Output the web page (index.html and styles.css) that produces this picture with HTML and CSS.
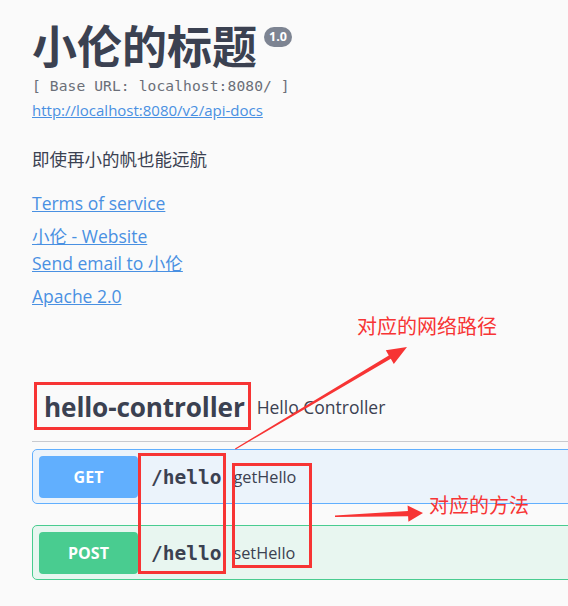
FILE: index.html
```html
<!DOCTYPE html>
<html lang="zh">
<head>
<meta charset="utf-8">
<title>小伦的标题</title>
<link rel="stylesheet" href="styles.css">
</head>
<body>
<div class="page">
  <section class="info">
    <div class="title-row">
      <h2 class="title">小伦的标题</h2>
      <span class="version">1.0</span>
    </div>
    <div class="base-url">[ Base URL: localhost:8080/ ]</div>
    <a class="link api-link" href="#">http://localhost:8080/v2/api-docs</a>
    <p class="desc">即使再小的帆也能远航</p>
    <a class="link info-link terms" href="#">Terms of service</a>
    <a class="link info-link website" href="#">小伦 - Website</a>
    <a class="link info-link email" href="#">Send email to 小伦</a>
    <a class="link info-link license" href="#">Apache 2.0</a>
  </section>

  <section class="tag">
    <h3 class="tag-head">
      <span class="tag-name">hello-controller</span>
      <small class="tag-desc">Hello Controller</small>
    </h3>
    <div class="opblock get">
      <span class="method">GET</span>
      <span class="path">/hello</span>
      <span class="summary">getHello</span>
    </div>
    <div class="opblock post">
      <span class="method">POST</span>
      <span class="path">/hello</span>
      <span class="summary">setHello</span>
    </div>
  </section>
</div>

<svg class="marks" width="568" height="606" viewBox="0 0 568 606" aria-hidden="true">
  <rect x="35.5" y="383.5" width="214" height="45" />
  <rect x="139.5" y="454.5" width="85" height="118" />
  <rect x="233.5" y="464.5" width="77" height="102" />
  <polygon class="arrow" points="235,448.6 388.8,355.4 385.8,350.2 407,347 393.8,364 390.8,358.8 235.6,449.4" />
  <polygon class="arrow" points="335,517 408.1,516.2 408.4,521.8 423,513 407.6,505.6 407.9,511 335,515.4" />
</svg>
<div class="note note-path">对应的网络路径</div>
<div class="note note-method">对应的方法</div>
</body>
</html>
```

FILE: styles.css
```css
html, body {
  margin: 0;
  padding: 0;
  overflow: hidden;
}
body {
  background: #fafafa;
  color: #3b4151;
  font-family: "Open Sans", "Noto Sans CJK SC", sans-serif;
  width: 568px;
  height: 606px;
  position: relative;
}
.page {
  width: 640px;
  padding: 20px 0 0 32px;
}
.info {
  display: flex;
  flex-direction: column;
  align-items: flex-start;
}
.title-row {
  display: flex;
  align-items: flex-start;
}
.title {
  margin: 0;
  font-family: "Noto Sans CJK SC", sans-serif;
  font-size: 45px;
  font-weight: 700;
  line-height: 50px;
  color: #3b4151;
}
.version {
  margin: 7px 0 0 7px;
  background: #7d8492;
  color: #fff;
  font-family: "Open Sans", sans-serif;
  font-weight: 700;
  font-size: 12.5px;
  line-height: 20px;
  padding: 0 5px;
  border-radius: 10px;
}
.base-url {
  margin-top: 7px;
  font-family: "DejaVu Sans Mono", monospace;
  font-size: 14.6px;
  line-height: 18px;
  color: #6b6f78;
  letter-spacing: 0.1px;
}
.link {
  color: #4990e2;
  text-decoration: underline;
}
.api-link {
  margin-top: 5px;
  font-size: 15px;
  line-height: 20px;
}
.desc {
  margin: 27px 0 0;
  font-family: "Noto Sans CJK SC", sans-serif;
  font-size: 17.5px;
  line-height: 24px;
}
.info-link {
  font-size: 17.5px;
  line-height: 24px;
}
.terms { margin-top: 20px; }
.website { margin-top: 9px; }
.email { margin-top: 3px; }
.license { margin-top: 9px; }

.tag {
  margin-top: 70px;
}
.tag-head {
  margin: 0;
  display: flex;
  align-items: center;
  padding: 12px 0 17px 12px;
  border-bottom: 1px solid #c9cacf;
}
.tag-name {
  font-size: 26.2px;
  font-weight: 700;
  line-height: 34px;
  letter-spacing: -0.15px;
}
.tag-desc {
  margin-left: 12px;
  font-size: 17.5px;
  font-weight: 400;
  line-height: 24px;
}
.opblock {
  display: flex;
  align-items: center;
  padding: 6px 6px 5px;
  border: 1px solid;
  border-radius: 5px;
}
.tag-head + .opblock { margin-top: 7px; }
.opblock + .opblock { margin-top: 21px; }
.get {
  border-color: #61affe;
  background: #ebf3fb;
}
.post {
  border-color: #49cc90;
  background: #e8f6f0;
}
.method {
  width: 99px;
  height: 42px;
  border-radius: 4px;
  color: #fff;
  font-weight: 700;
  font-size: 16px;
  line-height: 42px;
  text-align: center;
}
.get .method { background: #61affe; }
.post .method { background: #49cc90; }
.path {
  padding: 0 12px 0 13px;
  font-family: "DejaVu Sans Mono", monospace;
  font-weight: 700;
  font-size: 19.5px;
}
.summary {
  font-size: 16.3px;
}

.marks {
  position: absolute;
  left: 0;
  top: 0;
  pointer-events: none;
}
.marks rect {
  fill: none;
  stroke: #f73434;
  stroke-width: 3;
}
.marks .arrow {
  fill: #f73434;
  stroke: none;
}
.note {
  position: absolute;
  color: #f73434;
  font-family: "Noto Sans CJK SC", sans-serif;
  font-size: 20px;
  line-height: 20px;
}
.note-path { left: 357px; top: 316px; }
.note-method { left: 429px; top: 495px; }
```
